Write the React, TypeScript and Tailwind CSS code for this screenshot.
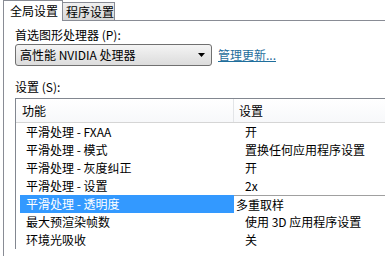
import React from "react";

const rows = [
  { name: "平滑处理 - FXAA", value: "开" },
  { name: "平滑处理 - 模式", value: "置换任何应用程序设置" },
  { name: "平滑处理 - 灰度纠正", value: "开" },
  { name: "平滑处理 - 设置", value: "2x" },
  { name: "平滑处理 - 透明度", value: "多重取样", selected: true },
  { name: "最大预渲染帧数", value: "使用 3D 应用程序设置" },
  { name: "环境光吸收", value: "关" },
];

export default function App() {
  return (
    <div
      className="w-[385px] h-[256px] overflow-hidden bg-white text-black text-[12px] leading-[14px]"
      style={{ fontFamily: '"Noto Sans CJK SC", "Liberation Sans", sans-serif' }}
    >
      {/* tabs */}
      <div className="flex h-[21px] pl-[3px]">
        <div className="w-[60px] flex items-center pl-[6px] border-l border-t border-r border-[#898c95] bg-white">
          全局设置
        </div>
        <div className="w-[52px] mt-[2px] flex items-center pl-[3px] border-t border-r border-b border-[#898c95] bg-gradient-to-b from-[#f0f0f0] to-[#d8d8d8]">
          程序设置
        </div>
        <div className="flex-1 border-b border-[#898c95]" />
      </div>

      {/* panel */}
      <div className="ml-[3px] h-[235px] border-l border-[#898c95] pl-[11px]">
        <div className="pt-[7px]">首选图形处理器 (P):</div>

        <div className="mt-[2px] flex items-center gap-[6px]">
          <div className="w-[197px] h-[22px] flex items-center justify-between pl-[4px] pr-[6px] rounded-[3px] border border-[#707070] bg-gradient-to-b from-[#f4f4f4] to-[#dcdcdc]">
            <span>高性能 NVIDIA 处理器</span>
            <svg width="7" height="4" viewBox="0 0 7 4">
              <path d="M0 0h7L3.5 4z" fill="#000" />
            </svg>
          </div>
          <span className="text-[#1f6e9c] underline">管理更新...</span>
        </div>

        <div className="mt-[14px]">设置 (S):</div>

        <div className="mt-[4px] w-[380px] shrink-0 border-l border-t border-[#828790]">
          {/* header */}
          <div className="flex h-[24px] border-b border-[#d5d5d5] bg-gradient-to-b from-white to-[#f7f8fa]">
            <div className="w-[218px] flex items-center pl-[6px] border-r border-[#e3e5e8]">功能</div>
            <div className="flex-1 flex items-center pl-[5px]">设置</div>
          </div>

          {rows.map((r) => (
            <div key={r.name} className="flex h-[18px]">
              <div className="w-[218px] pl-[4px] flex">
                <div
                  className={
                    r.selected
                      ? "flex-1 flex items-center pl-[6px] bg-[#3399ff] text-white"
                      : "flex-1 flex items-center pl-[6px]"
                  }
                >
                  {r.name}
                </div>
              </div>
              <div
                className={
                  r.selected
                    ? "flex-1 flex items-center pl-[2px] border-t border-[#a0a0a0]"
                    : "flex-1 flex items-center pl-[11px]"
                }
              >
                {r.value}
              </div>
            </div>
          ))}
        </div>
      </div>
    </div>
  );
}
